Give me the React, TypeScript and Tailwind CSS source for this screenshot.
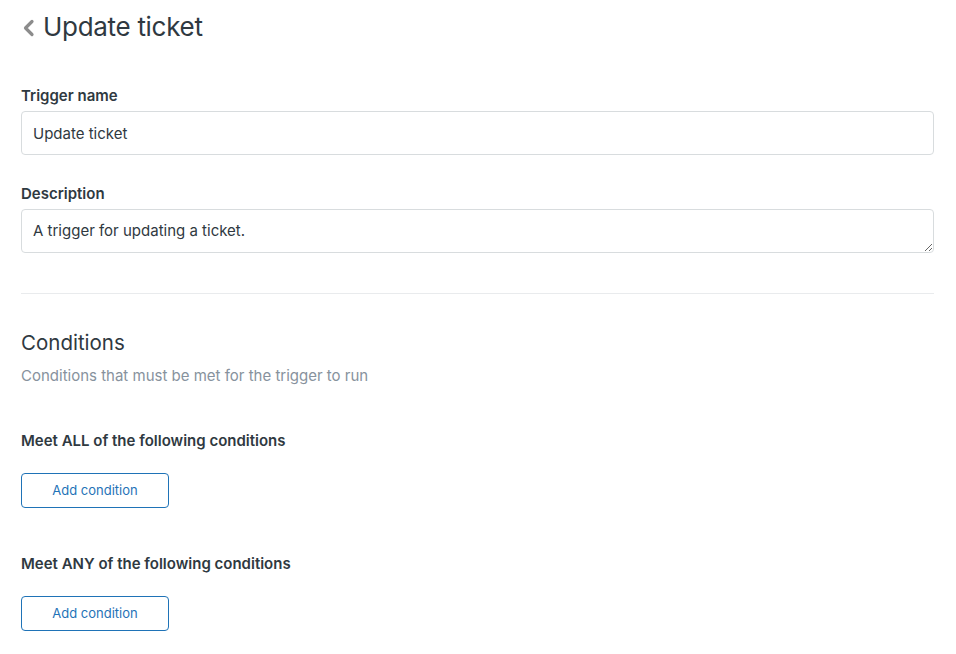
const font = { fontFamily: 'Inter, "Noto Sans", sans-serif' };

function ConditionGroup({ title }: { title: string }) {
  return (
    <div>
      <h3 className="text-[15px] font-semibold text-[#2f3941] leading-5">{title}</h3>
      <button className="mt-[22px] w-[148px] h-[35px] rounded border border-[#1f73b7] bg-white text-[13px] text-[#1f73b7]">
        Add condition
      </button>
    </div>
  );
}

export default function App() {
  return (
    <div className="min-h-screen bg-white px-[21px] pt-[10px] text-[#2f3941]" style={font}>
      {/* Header */}
      <div className="flex items-center h-[34px]">
        <svg width="13" height="18" viewBox="0 0 13 18" className="ml-[1px] mt-[2px]" fill="none">
          <polyline points="10,2.5 3.5,9 10,15.5" stroke="#8c8c8c" strokeWidth="3.2" strokeLinecap="round" strokeLinejoin="round" />
        </svg>
        <h1 className="ml-[8px] text-[26px] text-[#2f3941] leading-[34px] tracking-[-0.3px]">Update ticket</h1>
      </div>

      {/* Trigger name */}
      <div className="mt-[42px]">
        <label className="block text-[15px] font-semibold leading-5">Trigger name</label>
        <input
          defaultValue="Update ticket"
          className="mt-[5px] block w-[913px] h-[44px] rounded border border-[#d8dcde] px-[11px] text-[15px] text-[#2f3941] outline-none"
        />
      </div>

      {/* Description */}
      <div className="mt-[29px]">
        <label className="block text-[15px] font-semibold leading-5">Description</label>
        <textarea
          defaultValue="A trigger for updating a ticket."
          className="mt-[5px] block w-[913px] h-[44px] rounded border border-[#d8dcde] px-[11px] pt-[11px] text-[15px] text-[#2f3941] leading-5 outline-none resize-y"
        />
      </div>

      <hr className="mt-[40px] w-[913px] border-t border-[#e9ebed]" />

      {/* Conditions */}
      <div className="mt-[35px]">
        <h2 className="text-[20.5px] leading-7 text-[#2f3941]">Conditions</h2>
        <p className="mt-[9px] text-[15px] leading-5 text-[#87929d]">Conditions that must be met for the trigger to run</p>
      </div>

      <div className="mt-[45px]">
        <ConditionGroup title="Meet ALL of the following conditions" />
      </div>
      <div className="mt-[46px]">
        <ConditionGroup title="Meet ANY of the following conditions" />
      </div>
    </div>
  );
}
